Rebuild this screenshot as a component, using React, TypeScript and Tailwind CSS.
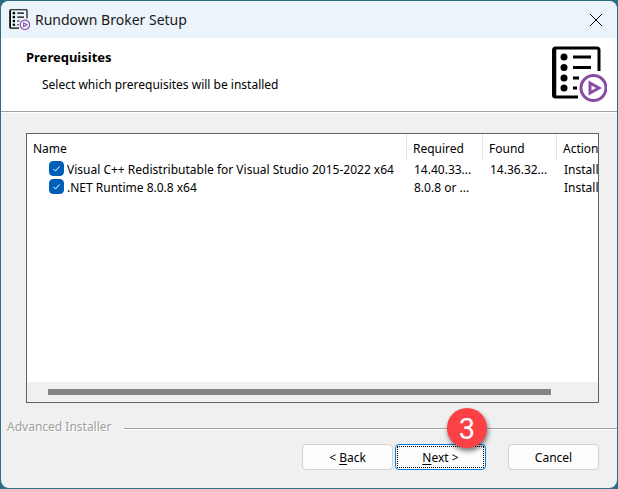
import clsx from 'clsx'
import { ButtonHTMLAttributes, ReactNode, useState } from 'react'

interface Prerequisite {
  id: string
  name: string
  required: string
  found: string
  action: string
}

const PREREQUISITES: Prerequisite[] = [
  {
    id: 'vcredist',
    name: 'Visual C++ Redistributable for Visual Studio 2015-2022 x64',
    required: '14.40.33...',
    found: '14.36.32...',
    action: 'Install',
  },
  {
    id: 'dotnet',
    name: '.NET Runtime 8.0.8 x64',
    required: '8.0.8 or ...',
    found: '',
    action: 'Install',
  },
]

const ROWS = [11, 21.5, 32, 42]

const BrokerLogo = ({ className }: { className?: string }) => (
  <svg viewBox="0 0 56 56" className={className} fill="none" aria-hidden="true">
    <path
      d="M27 51H4.500a2 2 0 0 1-2-2V4a2 2 0 0 1 2-2H46a2 2 0 0 1 2 2v21"
      stroke="#000"
      strokeWidth="3"
    />
    <path d="M3.500 3v47" stroke="#000" strokeWidth="3.500" />
    {ROWS.map((y) => (
      <circle key={y} cx="13" cy={y} r="3.500" fill="#000" />
    ))}
    <path
      d="M22 11h18M22 21.500h18M22 32h6M22 42h4"
      stroke="#000"
      strokeWidth="3"
    />
    <circle cx="42.500" cy="42" r="12.500" stroke="#8a4ba3" strokeWidth="3" />
    <path d="M39 37v10l9-5z" stroke="#8a4ba3" strokeWidth="3" />
  </svg>
)

interface WizardButtonProps extends ButtonHTMLAttributes<HTMLButtonElement> {
  focused?: boolean
  children: ReactNode
}

const WizardButton = ({ focused, children, ...rest }: WizardButtonProps) => (
  <button
    type="button"
    className={clsx(
      'h-[26px] w-[91px] rounded border bg-[#fdfdfd] p-px',
      focused ? 'border-[#0078d4]' : 'border-[#d0d0d0]'
    )}
    {...rest}
  >
    <span
      className={clsx(
        'flex h-full items-center justify-center border pt-0.5',
        focused ? 'border-dotted border-black' : 'border-transparent'
      )}
    >
      {children}
    </span>
  </button>
)

const PrerequisitesTable = () => {
  const [selected, setSelected] = useState<string[]>(['vcredist', 'dotnet'])

  const toggle = (id: string) => {
    setSelected(
      selected.includes(id)
        ? selected.filter((item) => item !== id)
        : [...selected, id]
    )
  }

  return (
    <div className="flex flex-1 flex-col border border-[#646464] bg-white">
      <div className="flex-1 overflow-hidden">
        <table className="w-[640px] table-fixed border-separate border-spacing-0 text-left whitespace-nowrap">
          <colgroup>
            <col className="w-[379px]" />
            <col className="w-[76px]" />
            <col className="w-[74px]" />
            <col />
          </colgroup>
          <thead>
            <tr className="h-[27px]">
              <th className="px-1.5 pt-0.5 pb-0 font-normal">Name</th>
              <th className="border-l border-[#e5e5e5] px-1.5 pt-0.5 pb-0 font-normal">
                Required
              </th>
              <th className="border-l border-[#e5e5e5] px-1.5 pt-0.5 pb-0 font-normal">
                Found
              </th>
              <th className="border-l border-[#e5e5e5] px-1.5 pt-0.5 pb-0 font-normal">
                Action
              </th>
            </tr>
          </thead>
          <tbody>
            {PREREQUISITES.map((item) => (
              <tr key={item.id} className="h-[18px]">
                <td className="p-0">
                  <label className="flex h-[18px] gap-[3px] pl-[22px] leading-[18px]">
                    <span className="relative flex size-[15px]">
                      <input
                        type="checkbox"
                        checked={selected.includes(item.id)}
                        onChange={() => toggle(item.id)}
                        className="peer size-[15px] appearance-none rounded border border-[#8a8a8a] checked:border-[#005fb8] checked:bg-[#005fb8]"
                      />
                      <svg
                        viewBox="0 0 15 15"
                        fill="none"
                        className="pointer-events-none absolute inset-0 hidden peer-checked:block"
                      >
                        <path d="M4.500 8l2 2 4-4.500" stroke="#fff" />
                      </svg>
                    </span>
                    {item.name}
                  </label>
                </td>
                <td className="py-0 pl-2">{item.required}</td>
                <td className="py-0 pl-2">{item.found}</td>
                <td className="py-0 pl-2">{item.action}</td>
              </tr>
            ))}
          </tbody>
        </table>
      </div>
      <div className="flex h-5 items-center bg-[#f0f0f0] pr-[47px] pl-[21px]">
        <div className="h-1.5 flex-1 bg-[#858585]" />
      </div>
    </div>
  )
}

const App = () => {
  return (
    <div className="flex min-h-screen bg-[#2c6e85] p-px font-['Noto_Sans',sans-serif] text-[12px] leading-4 text-black">
      <main className="flex flex-1 flex-col overflow-hidden rounded-lg bg-[#f0f0f0]">
        <header className="flex h-[37px] items-center bg-[#ebf3fb] pr-3.5 pl-2">
          <BrokerLogo className="size-[21px]" />
          <h1 className="flex-1 pl-[5px] text-[14px] text-[#191919]">
            Rundown Broker Setup
          </h1>
          <button type="button" aria-label="Close">
            <svg viewBox="0 0 14 14" className="size-3.5" fill="none">
              <path d="M1 1l12 12M13 1L1 13" stroke="#000" />
            </svg>
          </button>
        </header>

        <section className="flex h-[74px] justify-between border-b border-[#a0a0a0] bg-white pr-2.5 pl-[25px]">
          <div className="pt-[11px]">
            <h2 className="text-[13px] font-bold">Prerequisites</h2>
            <p className="pt-3 pl-4">
              Select which prerequisites will be installed
            </p>
          </div>
          <BrokerLogo className="mt-2 size-14" />
        </section>

        <section className="flex flex-1 flex-col border-t border-white px-[25px] pt-5 pr-[18px]">
          <PrerequisitesTable />
        </section>

        <footer className="pt-4 pb-[18px]">
          <div className="flex items-center gap-3 pl-1.5">
            <span className="text-[#a0a0a0] [text-shadow:1px_1px_#fff]">
              Advanced Installer
            </span>
            <div className="mt-1 flex-1 border-t border-b border-t-[#a0a0a0] border-b-white" />
          </div>
          <div className="flex justify-end pt-[9px] pr-[18px]">
            <WizardButton>
              <span>
                &lt; <u className="underline-offset-2">B</u>ack
              </span>
            </WizardButton>
            <div className="relative mr-[22px] ml-0.5 flex">
              <WizardButton focused>
                <span>
                  <u className="underline-offset-2">N</u>ext &gt;
                </span>
              </WizardButton>
              <span className="absolute -top-9 -right-px flex size-10 items-center justify-center rounded-full bg-[#fb4145] pt-0.5 font-['Roboto',sans-serif] text-[29px] text-white shadow-[1px_3px_5px_#0008]">
                3
              </span>
            </div>
            <WizardButton>Cancel</WizardButton>
          </div>
        </footer>
      </main>
    </div>
  )
}

export default App
